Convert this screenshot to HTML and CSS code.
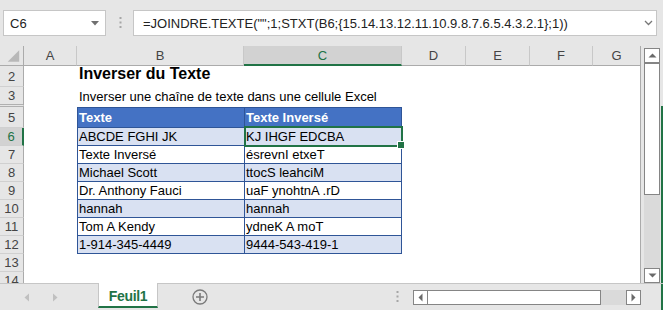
FILE: index.html
```html
<!DOCTYPE html>
<html lang="fr">
<head>
    <meta charset="UTF-8">
    <title>Inverser du Texte</title>
    <link rel="stylesheet" href="styles.css">
</head>
<body>
    <div class="excel">
        <!-- Barre de formule -->
        <div class="toolbar">
            <div class="namebox">
                <span>C6</span>
                <svg width="8" height="5" viewBox="0 0 8 5"><path d="M0 0H8L4 4.5Z" fill="#707070"/></svg>
            </div>
            <svg class="grip" width="3" height="12" viewBox="0 0 3 12">
                <rect x="0.5" y="0" width="2" height="2" fill="#a6a6a6"/>
                <rect x="0.5" y="4.5" width="2" height="2" fill="#a6a6a6"/>
                <rect x="0.5" y="9" width="2" height="2" fill="#a6a6a6"/>
            </svg>
            <div class="formula">
                <span>=JOINDRE.TEXTE("";1;STXT(B6;{15.14.13.12.11.10.9.8.7.6.5.4.3.2.1};1))</span>
                <svg width="9" height="6" viewBox="0 0 9 6"><path d="M1 1L4.5 4.5L8 1" fill="none" stroke="#777" stroke-width="1.3"/></svg>
            </div>
        </div>

        <!-- Feuille -->
        <div class="sheet">
            <div class="grid">
                <div class="row head">
                    <div class="corner">
                        <svg width="24" height="19" viewBox="0 0 24 19"><path d="M8 16H20V4Z" fill="#b8b8b8"/></svg>
                    </div>
                    <div>A</div>
                    <div>B</div>
                    <div class="sel">C</div>
                    <div>D</div>
                    <div>E</div>
                    <div>F</div>
                    <div>G</div>
                </div>

                <div class="row r2">
                    <div class="num">2</div>
                    <div class="b title">Inverser du Texte</div>
                </div>
                <div class="row r3">
                    <div class="num hidden-next">3</div>
                    <div class="b note">Inverser une chaîne de texte dans une cellule Excel</div>
                </div>
                <div class="row r5">
                    <div class="num">5</div>
                    <div class="b t th">Texte</div>
                    <div class="c t th">Texte Inversé</div>
                </div>
                <div class="row tr band">
                    <div class="num sel">6</div>
                    <div class="b t">ABCDE FGHI JK</div>
                    <div class="c t active">KJ IHGF EDCBA</div>
                </div>
                <div class="row tr">
                    <div class="num">7</div>
                    <div class="b t">Texte Inversé</div>
                    <div class="c t">ésrevnI etxeT</div>
                </div>
                <div class="row tr band">
                    <div class="num">8</div>
                    <div class="b t">Michael Scott</div>
                    <div class="c t">ttocS leahciM</div>
                </div>
                <div class="row tr">
                    <div class="num">9</div>
                    <div class="b t">Dr. Anthony Fauci</div>
                    <div class="c t">uaF ynohtnA .rD</div>
                </div>
                <div class="row tr band">
                    <div class="num">10</div>
                    <div class="b t">hannah</div>
                    <div class="c t">hannah</div>
                </div>
                <div class="row tr">
                    <div class="num">11</div>
                    <div class="b t">Tom A Kendy</div>
                    <div class="c t">ydneK A moT</div>
                </div>
                <div class="row tr band">
                    <div class="num">12</div>
                    <div class="b t">1-914-345-4449</div>
                    <div class="c t">9444-543-419-1</div>
                </div>
                <div class="row tr">
                    <div class="num">13</div>
                </div>
                <div class="row tr">
                    <div class="num">14</div>
                </div>
            </div>

            <div class="vscroll">
                <div class="bar">
                    <div class="btn">
                        <svg width="9" height="5" viewBox="0 0 9 5"><path d="M0.5 4.5H8.5L4.5 0.5Z" fill="#6a6a6a"/></svg>
                    </div>
                    <div class="thumb v"></div>
                    <div class="track"></div>
                    <div class="btn">
                        <svg width="9" height="5" viewBox="0 0 9 5"><path d="M0.5 0.5H8.5L4.5 4.5Z" fill="#6a6a6a"/></svg>
                    </div>
                </div>
                <div class="edge"></div>
            </div>
        </div>

        <!-- Onglets -->
        <div class="tabbar">
            <div class="nav">
                <svg width="6" height="9" viewBox="0 0 6 9"><path d="M5 0.5V8.5L0.5 4.5Z" fill="#c0c0c0"/></svg>
                <svg width="6" height="9" viewBox="0 0 6 9"><path d="M1 0.5V8.5L5.5 4.5Z" fill="#c0c0c0"/></svg>
            </div>
            <div class="tab">Feuil1</div>
            <svg class="add" width="16" height="16" viewBox="0 0 16 16">
                <circle cx="8" cy="8" r="7" fill="none" stroke="#7a7a7a" stroke-width="1.3"/>
                <path d="M8 4V12M4 8H12" stroke="#7a7a7a" stroke-width="1.6"/>
            </svg>
            <div class="spacer"></div>
            <svg class="grip" width="3" height="12" viewBox="0 0 3 12">
                <rect x="0.5" y="0" width="2" height="2" fill="#a6a6a6"/>
                <rect x="0.5" y="4.5" width="2" height="2" fill="#a6a6a6"/>
                <rect x="0.5" y="9" width="2" height="2" fill="#a6a6a6"/>
            </svg>
            <div class="hscroll">
                <div class="btn">
                    <svg width="5" height="9" viewBox="0 0 5 9"><path d="M4.5 0.5V8.5L0.5 4.5Z" fill="#6a6a6a"/></svg>
                </div>
                <div class="thumb h"></div>
                <div class="track"></div>
                <div class="btn">
                    <svg width="5" height="9" viewBox="0 0 5 9"><path d="M0.5 0.5V8.5L4.5 4.5Z" fill="#6a6a6a"/></svg>
                </div>
            </div>
            <div class="corner-end">
                <div class="edge"></div>
            </div>
        </div>
    </div>
</body>
</html>
```

FILE: styles.css
```css
* {
    box-sizing: border-box;
}

body {
    margin: 0;
    background: #e6e6e6;
    font-family: "Liberation Sans", Arial, sans-serif;
    overflow: hidden;
}

.excel {
    width: 663px;
    height: 310px;
    display: flex;
    flex-direction: column;
    background: #e6e6e6;
}

/* barre de formule */
.toolbar {
    height: 46px;
    display: flex;
    align-items: flex-start;
    padding: 10px 0 0 3px;
}

.namebox {
    width: 103px;
    height: 26px;
    background: #fff;
    border: 1px solid #c6c6c6;
    display: flex;
    align-items: center;
    justify-content: space-between;
    padding: 0 6px 0 6px;
    font-size: 13px;
    color: #222;
}

.toolbar .grip {
    margin: 7px 11px 0 13px;
}

.formula {
    width: 524px;
    height: 26px;
    background: #fff;
    border: 1px solid #c6c6c6;
    display: flex;
    align-items: center;
    justify-content: space-between;
    padding: 0 3px 0 9px;
    font-size: 13px;
    color: #222;
    white-space: nowrap;
}

/* feuille */
.sheet {
    display: flex;
    height: 237px;
}

.grid {
    width: 641px;
    height: 237px;
    background: #fff;
    border-right: 1px solid #ababab;
    overflow: hidden;
}

.row {
    display: grid;
    grid-template-columns: 24px 53px 167px 158px 64px 64px 63px 47px;
    font-size: 13px;
}

.head {
    height: 20px;
    background: #e6e6e6;
}

.head > div {
    display: flex;
    align-items: center;
    justify-content: center;
    border-right: 1px solid #c8c8c8;
    border-bottom: 1px solid #ababab;
    color: #444;
}

.head > div:last-child {
    border-right: none;
}

.head .corner {
    border-right-color: #ababab;
}

.head .sel {
    background: #d2d2d2;
    color: #217346;
    border-bottom: 2px solid #217346;
    padding-top: 1px;
}

.num {
    grid-column: 1;
    display: flex;
    align-items: center;
    justify-content: center;
    background: #e6e6e6;
    border-right: 1px solid #ababab;
    border-bottom: 1px solid #d0d0d0;
    color: #444;
}

.num.sel {
    background: #d2d2d2;
    color: #217346;
    border-right: 2px solid #217346;
}

.num.hidden-next {
    border-bottom: 3px double #b0b0b0;
}

.b {
    grid-column: 3;
    white-space: nowrap;
    padding-left: 2px;
    color: #000;
}

.c {
    grid-column: 4;
    white-space: nowrap;
    color: #000;
}

.r2 {
    height: 21px;
}

.title {
    font-size: 16px;
    font-weight: bold;
    line-height: 15px;
}

.r3 {
    height: 20px;
}

.note {
    line-height: 19px;
}

.r5 {
    height: 21px;
}

.tr {
    height: 18px;
}

/* tableau */
.t {
    padding-left: 1px;
    border-left: 1px solid #2f5597;
    border-bottom: 1px solid #2f5597;
    line-height: 17px;
}

.c.t {
    border-right: 1px solid #2f5597;
}

.th {
    background: #4472c4;
    color: #fff;
    font-weight: bold;
    border-top: 1px solid #2f5597;
    line-height: 19px;
}

.band .t {
    background: #d9e1f2;
}

.active {
    position: relative;
}

.active::after {
    content: "";
    position: absolute;
    top: -2px;
    left: -1px;
    right: -2px;
    bottom: -2px;
    border: 2px solid #217346;
}

.active::before {
    content: "";
    position: absolute;
    right: -4px;
    bottom: -4px;
    width: 6px;
    height: 6px;
    background: #217346;
    border: 1px solid #fff;
    z-index: 1;
}

/* barres de defilement */
.vscroll {
    width: 22px;
    display: flex;
}

.vscroll .bar {
    width: 16px;
    margin: 2px 0 0 3px;
    display: flex;
    flex-direction: column;
}

.btn {
    display: flex;
    align-items: center;
    justify-content: center;
    background: #fff;
    border: 1px solid #858585;
}

.vscroll .btn {
    height: 15px;
}

.thumb {
    background: #fff;
    border: 1px solid #858585;
}

.thumb.v {
    height: 133px;
    margin-top: -1px;
    border-top-width: 2px;
}

.track {
    flex: 1;
    background: #dadada;
}

.edge {
    width: 2px;
    margin-left: 1px;
    background: linear-gradient(to bottom, #e6e6e6 0 60px, #217346 60px);
}

/* onglets */
.tabbar {
    height: 27px;
    display: flex;
    align-items: flex-start;
    border-top: 1px solid #c6c6c6;
}

.nav {
    width: 98px;
    height: 26px;
    display: flex;
    align-items: center;
    gap: 22px;
    padding-left: 24px;
}

.tab {
    width: 60px;
    height: 25px;
    margin-top: -1px;
    background: #fff;
    border-left: 1px solid #c6c6c6;
    border-right: 1px solid #c6c6c6;
    border-bottom: 2px solid #217346;
    display: flex;
    align-items: center;
    justify-content: center;
    padding-top: 2px;
    font-size: 14px;
    font-weight: bold;
    color: #217346;
    letter-spacing: -0.3px;
}

.add {
    margin: 5px 0 0 34px;
}

.spacer {
    flex: 1;
}

.tabbar .grip {
    margin: 7px 14px 0 0;
}

.hscroll {
    width: 228px;
    height: 15px;
    margin-top: 6px;
    display: flex;
}

.hscroll .btn {
    width: 15px;
}

.thumb.h {
    width: 174px;
    margin-left: -1px;
}

.corner-end {
    width: 22px;
    height: 26px;
    display: flex;
    justify-content: flex-end;
}

.corner-end .edge {
    background: #217346;
    margin-right: 0;
}
```
